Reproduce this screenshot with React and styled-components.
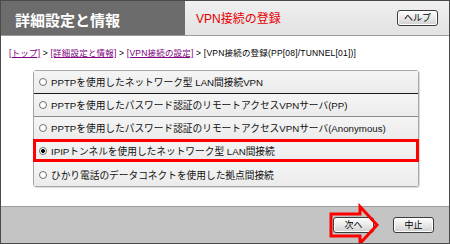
import React from 'react'
import styled, { createGlobalStyle } from 'styled-components'

const GlobalStyle = createGlobalStyle`
  body {
    margin: 0;
    background: #fff;
    font-family: "Liberation Sans", "Noto Sans CJK JP", sans-serif;
  }
`

const options = [
  'PPTPを使用したネットワーク型 LAN間接続VPN',
  'PPTPを使用したパスワード認証のリモートアクセスVPNサーバ(PP)',
  'PPTPを使用したパスワード認証のリモートアクセスVPNサーバ(Anonymous)',
  'IPIPトンネルを使用したネットワーク型 LAN間接続',
  'ひかり電話のデータコネクトを使用した拠点間接続',
]

const App = () => {
  const selected = 3

  return (
    <>
      <GlobalStyle />
      <Frame>
        <Header>
          <TitleBlock>詳細設定と情報</TitleBlock>
          <PageBar>
            <PageTitle>VPN接続の登録</PageTitle>
            <Button>ヘルプ</Button>
          </PageBar>
        </Header>

        <Crumbs>
          <a href="#">[トップ]</a> &gt; <a href="#">[詳細設定と情報]</a> &gt;{' '}
          <a href="#">[VPN接続の設定]</a> &gt; [VPN接続の登録(PP[08]/TUNNEL[01])]
        </Crumbs>

        <OptionBox>
          {options.map((label, i) => (
            <OptionRow key={i} $active={i === selected} $dark={i === 0}>
              <Radio $checked={i === selected} />
              <span>{label}</span>
            </OptionRow>
          ))}
        </OptionBox>

        <Footer>
          <NextWrap>
            <Button>次へ</Button>
            <Arrow width="52" height="44" viewBox="0 0 52 44">
              <path d="M2 9 H31 V1.5 L48 20 L31 38.5 V31 H2 Z" />
            </Arrow>
          </NextWrap>
          <Button>中止</Button>
        </Footer>
      </Frame>
    </>
  )
}

const Frame = styled.div`
  width: 450px;
  height: 244px;
  box-sizing: border-box;
  border: 1px solid #4a4a4a;
  display: flex;
  flex-direction: column;
  background: #fff;
  overflow: hidden;
`

const Header = styled.div`
  display: flex;
  height: 34px;
  border-bottom: 1px solid #9a9a9a;
  flex-shrink: 0;
`

const TitleBlock = styled.div`
  width: 184px;
  background: #6c6c6c;
  color: #fff;
  font-family: "Noto Sans CJK JP", sans-serif;
  font-weight: bold;
  font-size: 15px;
  padding-left: 14px;
  display: flex;
  align-items: center;
  padding-top: 3px;
  box-sizing: border-box;
`

const PageBar = styled.div`
  flex: 1;
  display: flex;
  align-items: center;
  justify-content: space-between;
  padding: 0 11px 0 11px;
  background: linear-gradient(#f0f0f0, #e2e2e2);
`

const PageTitle = styled.div`
  color: #e60000;
  font-size: 12px;
  margin-bottom: 1px;
`

const Button = styled.button`
  width: 41px;
  height: 16px;
  padding: 0;
  border: 1px solid #3c3c3c;
  border-radius: 3px;
  background: linear-gradient(#ffffff, #e4e4e4 60%, #cfcfcf);
  box-shadow: inset 0 0 0 1px #fff;
  font-family: "Noto Sans CJK JP", sans-serif;
  font-size: 9px;
  line-height: 14px;
  color: #000;
`

const Crumbs = styled.div`
  margin: 11px 0 0 8px;
  font-size: 8.5px;
  letter-spacing: 0.2px;
  line-height: 12px;
  color: #000;
  white-space: nowrap;

  a {
    color: #800080;
    text-decoration: underline;
  }
`

const OptionBox = styled.div`
  margin: 11px 0 0 32px;
  width: 386px;
  box-sizing: border-box;
  border: 1px solid #a6a6a6;
  border-radius: 3px;
  background: #efefef;
  box-shadow: 1px 1px 1px rgba(0, 0, 0, 0.15);
`

const OptionRow = styled.div`
  position: relative;
  height: 23px;
  box-sizing: border-box;
  display: flex;
  align-items: center;
  gap: 4px;
  padding-left: 5px;
  font-size: 9.7px;
  color: #111;
  background: linear-gradient(#f5f5f5, #ebebeb);
  border-bottom: 1px solid ${(p) => (p.$dark ? '#1a1a1a' : '#8c8c8c')};

  &:last-child {
    border-bottom: none;
  }

  ${(p) =>
    p.$active &&
    `
    border-bottom-color: transparent;
    &::after {
      content: '';
      position: absolute;
      inset: -1px -1px 0 -1px;
      border: 3px solid #ff0000;
    }
  `}
`

const Radio = styled.span`
  width: 8px;
  height: 8px;
  box-sizing: border-box;
  border-radius: 50%;
  border: 1px solid #707070;
  background: ${(p) =>
    p.$checked ? 'radial-gradient(circle, #000 0 1.8px, #fff 2.2px)' : '#fff'};
  flex-shrink: 0;
`

const Footer = styled.div`
  margin-top: auto;
  height: 36px;
  flex-shrink: 0;
  background: #c4c4c4;
  border-top: 1px solid #9c9c9c;
  display: flex;
  align-items: center;
  justify-content: flex-end;
  gap: 19px;
  padding-right: 15px;
`

const NextWrap = styled.div`
  position: relative;
  display: flex;
`

const Arrow = styled.svg`
  position: absolute;
  left: -4px;
  top: -12px;
  pointer-events: none;
  overflow: visible;

  path {
    fill: none;
    stroke: #ff0000;
    stroke-width: 3;
  }
`

export default App
